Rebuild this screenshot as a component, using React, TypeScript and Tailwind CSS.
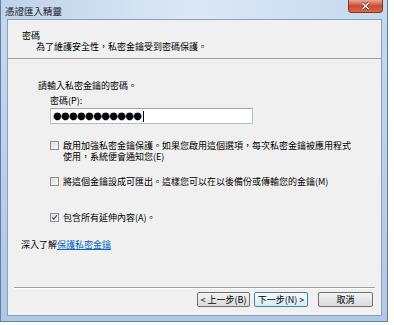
import React from "react";

const CJK = "font-['Noto_Sans_CJK_TC','Microsoft_JhengHei',sans-serif]";

function Checkbox({ checked }: { checked?: boolean }) {
  return (
    <span className="mt-[1px] flex h-[9px] w-[9px] shrink-0 items-center justify-center border border-[#8f8f8f] bg-gradient-to-br from-[#dedede] to-[#f7f7f7]">
      {checked && (
        <svg viewBox="0 0 9 9" className="h-[9px] w-[9px]">
          <path d="M1.6 4.4 L3.6 6.6 L7.6 1.6" fill="none" stroke="#2c3f8c" strokeWidth={1.5} />
        </svg>
      )}
    </span>
  );
}

function Button({ label, primary }: { label: string; primary?: boolean }) {
  return (
    <button
      className={
        primary
          ? "flex h-[15px] w-[54px] items-center justify-center rounded-[2px] border border-[#3c7fb1] bg-gradient-to-b from-[#f4fafe] to-[#d8ebf8] text-[9px] leading-[11px] text-black"
          : "flex h-[15px] w-[53px] items-center justify-center rounded-[2px] border border-[#707070] bg-gradient-to-b from-[#f4f4f4] to-[#d9d9d9] text-[9px] leading-[11px] text-black"
      }
    >
      {label}
    </button>
  );
}

export default function App() {
  return (
    <div className={`h-[325px] w-[394px] overflow-hidden bg-white ${CJK}`}>
      <div className="flex h-[322px] w-[388px] flex-col border-x border-b border-[#62809f] bg-gradient-to-b from-[#c6d9ee] to-[#aec8e6]">
        {/* title bar */}
        <div className="flex h-[19px] shrink-0 items-start justify-between bg-gradient-to-r from-[#bfd3ea] via-[#dce8f5] to-[#c4d8ee]">
          <span className="pl-[4px] pt-[5px] text-[9.5px] leading-[12px] text-[#1a1a1a]">
            憑證匯入精靈
          </span>
          <div className="mr-[4px] flex h-[13px] w-[35px] items-center justify-center rounded-b-[4px] border border-t-0 border-[#7e3426] bg-gradient-to-b from-[#e9a596] via-[#cb4a30] to-[#d9694d]">
            <svg viewBox="0 0 10 9" className="h-[8px] w-[9px]">
              <path d="M1.5 1 L8.5 8 M8.5 1 L1.5 8" stroke="#5a2218" strokeWidth={3} />
              <path d="M1.5 1 L8.5 8 M8.5 1 L1.5 8" stroke="#ffffff" strokeWidth={1.6} />
            </svg>
          </div>
        </div>

        <div className="flex flex-1 pb-[5px] pl-[6px] pr-[5px]">
          {/* client area */}
          <div className="flex flex-1 flex-col border border-[#8a9fbd] bg-[#f0f0f0] text-[9px] leading-[11px] text-black">
            {/* header */}
            <div className="h-[38px] shrink-0 pt-[10px]">
              <div className="pl-[14px]">密碼</div>
              <div className="pl-[28px]">為了維護安全性，私密金鑰受到密碼保護。</div>
            </div>

            <div className="flex flex-1 flex-col border-t border-[#a0a0a0] pl-[13px]">
              <div className="ml-[17px] mt-[21px]">請輸入私密金鑰的密碼。</div>
              <div className="ml-[29px] mt-[4px]">密碼(P):</div>
              <div className="ml-[29px] mt-[2px] flex h-[16px] w-[203px] items-center border border-[#b5c0cf] border-t-[#9ea6b2] bg-white pl-[2px]">
                <span className="font-['DejaVu_Sans',sans-serif] text-[10px] leading-[12px] tracking-[-0.7px]">
                  ●●●●●●●●●●●
                </span>
                <span className="ml-[2px] h-[11px] w-[1px] bg-black" />
              </div>

              <div className="ml-[29px] mt-[16px] flex gap-[4px]">
                <Checkbox />
                <span className="w-[292px]">
                  啟用加強私密金鑰保護。如果您啟用這個選項，每次私密金鑰被應用程式使用，系統便會通知您(E)
                </span>
              </div>

              <div className="ml-[29px] mt-[14px] flex gap-[4px]">
                <Checkbox />
                <span>將這個金鑰設成可匯出。這樣您可以在以後備份或傳輸您的金鑰(M)</span>
              </div>

              <div className="ml-[29px] mt-[25px] flex gap-[4px]">
                <Checkbox checked />
                <span>包含所有延伸內容(A)。</span>
              </div>

              <div className="mt-[16px]">
                深入了解<span className="text-[#0066cc] underline">保護私密金鑰</span>
              </div>

              {/* footer */}
              <div className="-ml-[7px] mr-[6px] mt-auto h-[2px] border-b border-t border-b-white border-t-[#a0a0a0]" />
              <div className="mb-[8px] mr-[8px] mt-[3px] flex justify-end">
                <Button label="< 上一步(B)" />
                <div className="ml-[4px]">
                  <Button label="下一步(N) >" primary />
                </div>
                <div className="ml-[10px] w-[55px]">
                  <button className="flex h-[15px] w-[55px] items-center justify-center rounded-[2px] border border-[#707070] bg-gradient-to-b from-[#f4f4f4] to-[#d9d9d9] text-[9px] leading-[11px] text-black">
                    取消
                  </button>
                </div>
              </div>
            </div>
          </div>
        </div>
      </div>
    </div>
  );
}
